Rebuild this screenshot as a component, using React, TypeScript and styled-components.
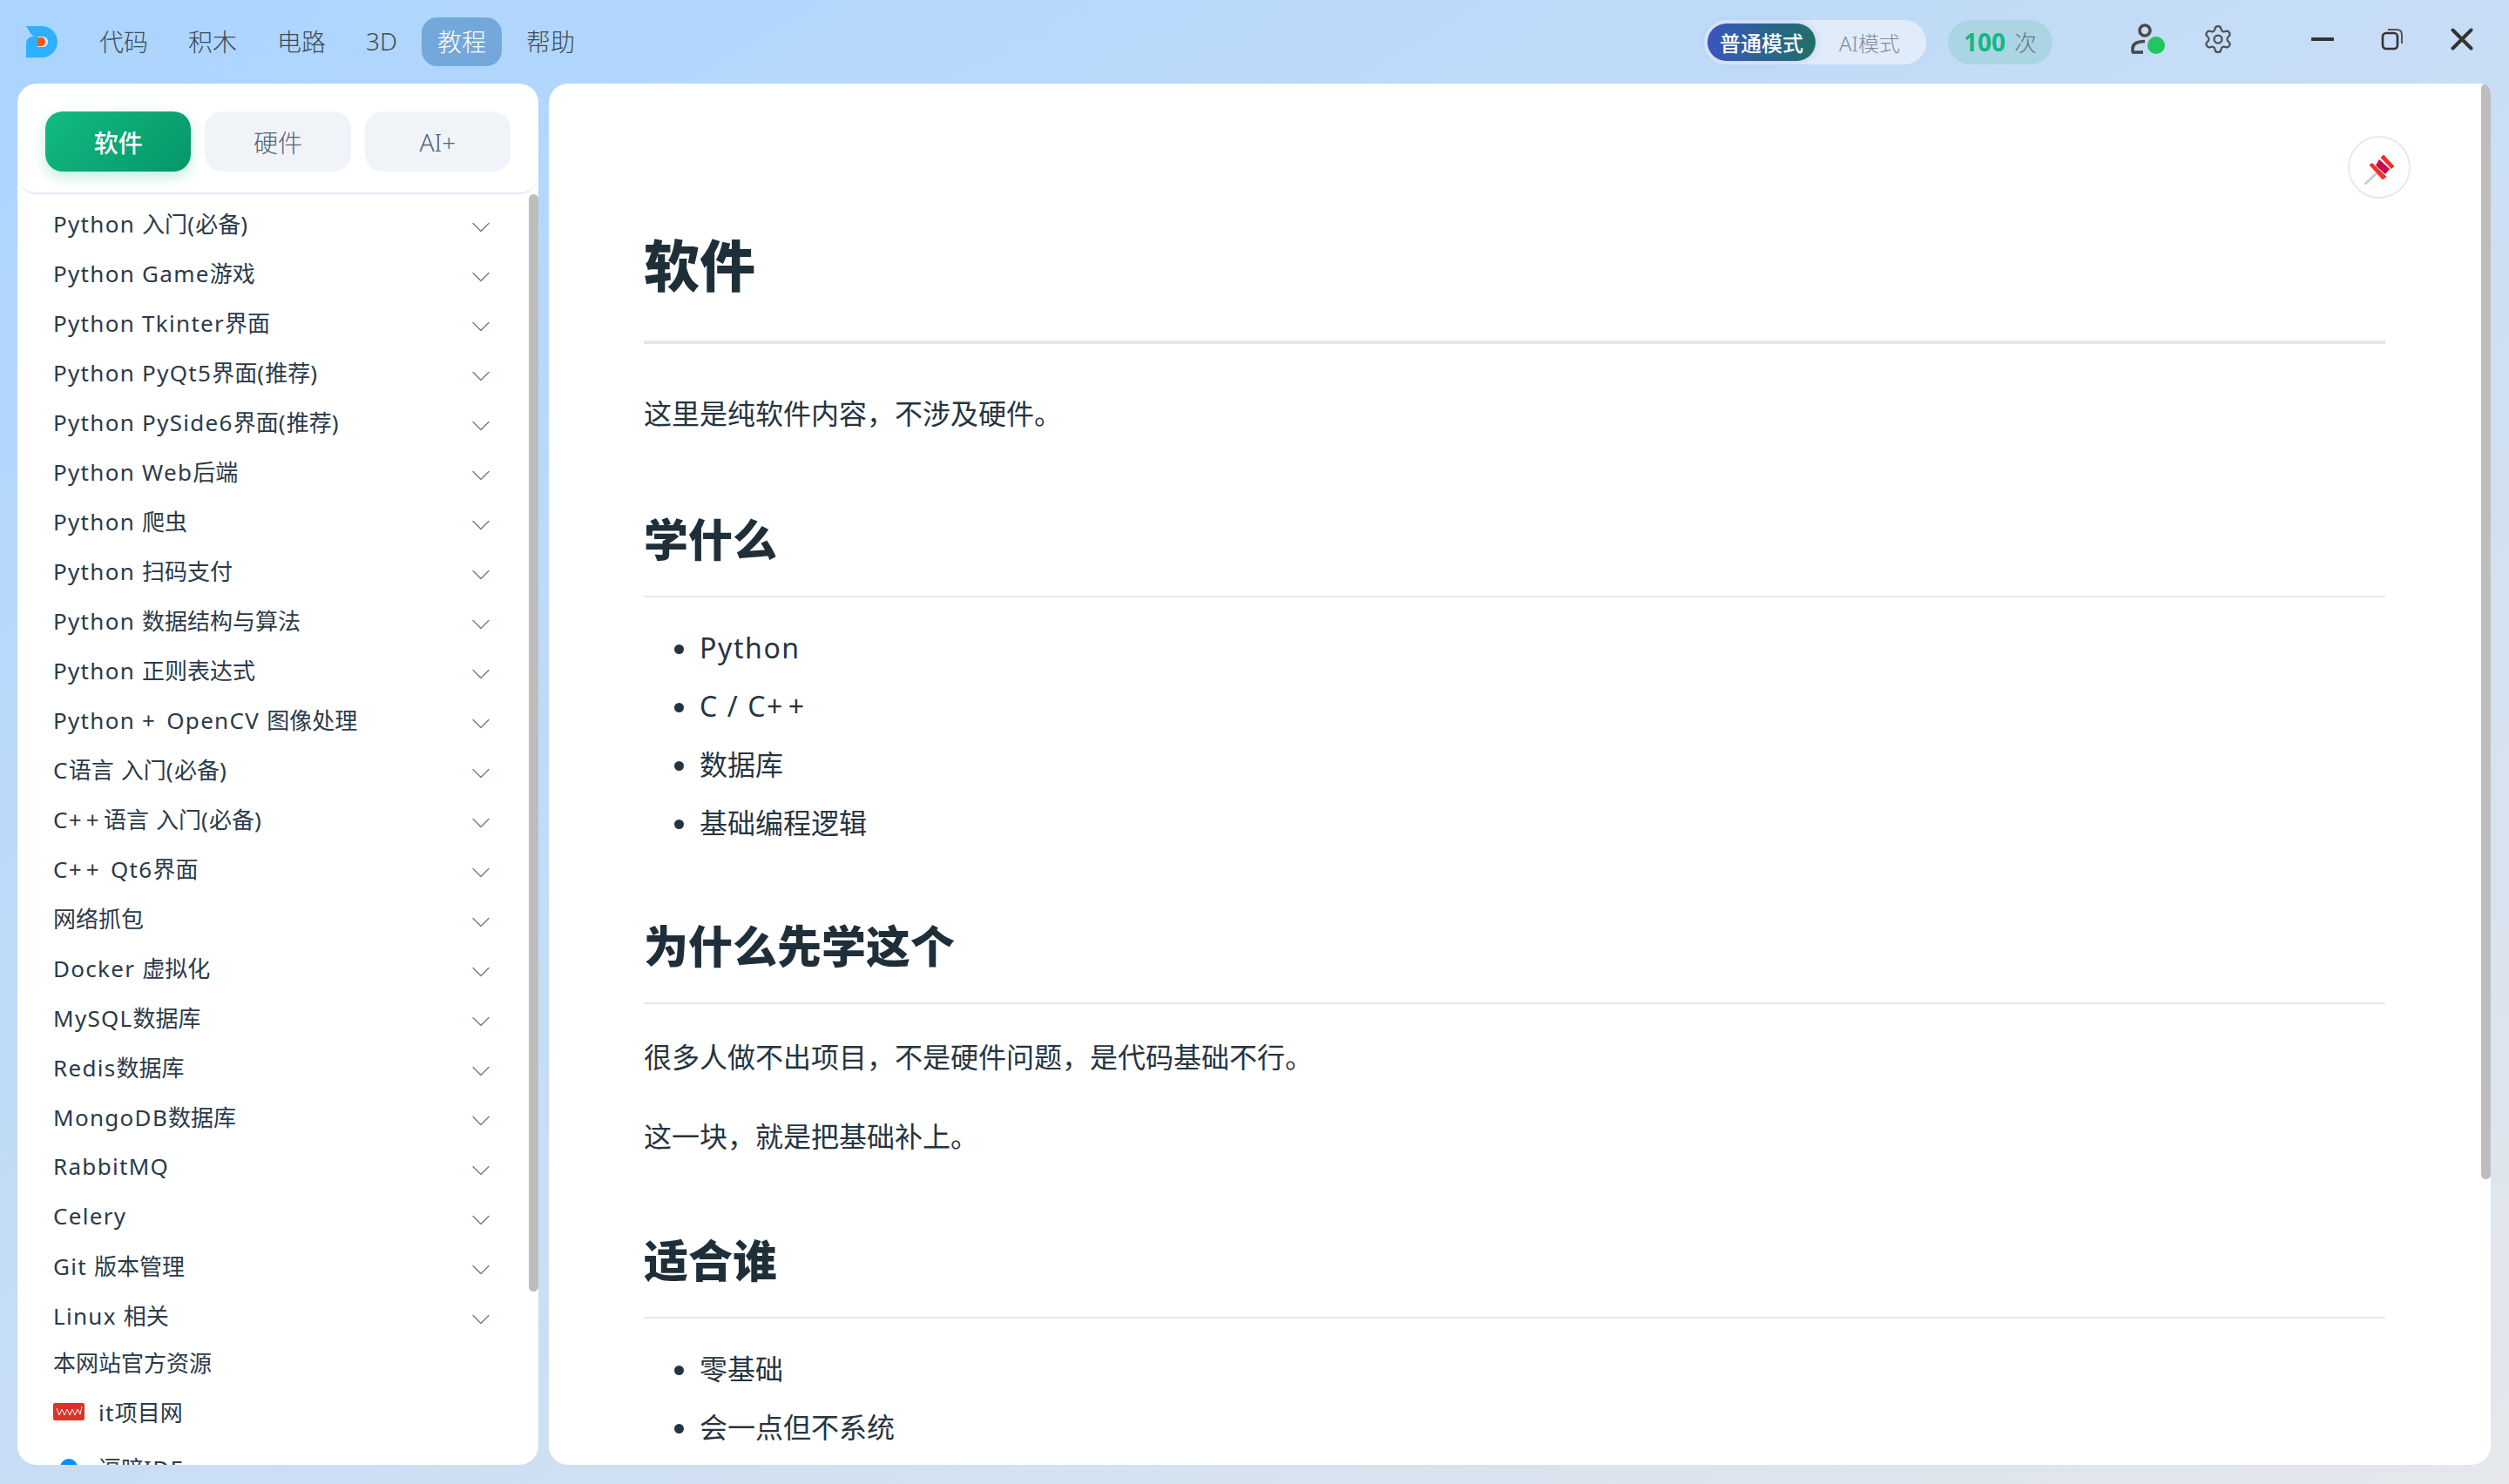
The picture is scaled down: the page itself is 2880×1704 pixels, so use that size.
import React from "react";
import styled, { createGlobalStyle } from "styled-components";
import { ChevronDown, Settings } from "lucide-react";

const FONT = `"Noto Sans", "Noto Sans CJK SC", sans-serif`;

const GlobalStyle = createGlobalStyle`
  html, body {
    margin: 0;
    padding: 0;
    height: 100%;
  }
  body {
    font-family: ${FONT};
    overflow: hidden;
  }
  * {
    box-sizing: border-box;
  }
`;

const navItems = ["代码", "积木", "电路", "3D", "教程", "帮助"];

const courses = [
  "Python 入门(必备)",
  "Python Game游戏",
  "Python Tkinter界面",
  "Python PyQt5界面(推荐)",
  "Python PySide6界面(推荐)",
  "Python Web后端",
  "Python 爬虫",
  "Python 扫码支付",
  "Python 数据结构与算法",
  "Python 正则表达式",
  "Python + OpenCV 图像处理",
  "C语言 入门(必备)",
  "C++语言 入门(必备)",
  "C++ Qt6界面",
  "网络抓包",
  "Docker 虚拟化",
  "MySQL数据库",
  "Redis数据库",
  "MongoDB数据库",
  "RabbitMQ",
  "Celery",
  "Git 版本管理",
  "Linux 相关",
];

const Shell = styled.div`
  width: 2880px;
  height: 1704px;
  display: flex;
  flex-direction: column;
  overflow: hidden;
  background: linear-gradient(150deg, #aad4ff, #e5e7eb);
`;

const TopBar = styled.header`
  height: 96px;
  flex: none;
  display: flex;
  align-items: center;
  padding: 0 41px 0 30px;
`;

const Logo = styled.svg`
  width: 36px;
  height: 36px;
  margin-right: 30px;
`;

const Nav = styled.nav`
  display: flex;
  gap: 10px;
`;

const NavItem = styled.a<{ $active?: boolean }>`
  height: 56px;
  padding: 0 18px 2px;
  display: flex;
  align-items: center;
  border-radius: 18px;
  font-size: 28px;
  font-weight: 300;
  color: ${(p) => (p.$active ? "#ffffff" : "#3f4a55")};
  background: ${(p) => (p.$active ? "#74a7da" : "transparent")};
`;

const RightBar = styled.div`
  margin-left: auto;
  display: flex;
  align-items: center;
`;

const ModeSwitch = styled.div`
  width: 255px;
  height: 51px;
  padding: 4px;
  margin-right: 25px;
  display: flex;
  align-items: center;
  border-radius: 26px;
  background: #e1ecfb;
`;

const ModeActive = styled.span`
  width: 124px;
  height: 43px;
  display: flex;
  align-items: center;
  justify-content: center;
  border-radius: 22px;
  font-size: 24px;
  font-weight: 500;
  color: #ffffff;
  background: linear-gradient(90deg, #3a55bd, #1f7068);
  box-shadow: 0 0 10px rgba(90, 130, 220, 0.3);
`;

const ModeIdle = styled.span`
  margin-left: 27px;
  font-size: 24px;
  font-weight: 300;
  color: #7f8b9b;
`;

const Counter = styled.div`
  width: 120px;
  height: 51px;
  margin-right: 90px;
  display: flex;
  align-items: center;
  justify-content: center;
  gap: 10px;
  border-radius: 26px;
  background: #acd5e4;
`;

const CounterValue = styled.b`
  font-size: 28px;
  font-weight: 700;
  color: #10b981;
`;

const CounterUnit = styled.span`
  font-size: 26px;
  font-weight: 300;
  color: #66757f;
`;

const UserIcon = styled.svg`
  width: 40px;
  height: 36px;
  margin: 0 42px 6px 0;
`;

const GearIcon = styled(Settings)`
  width: 36px;
  height: 36px;
  margin: 0 89px 6px 0;
  color: #4a4f55;
`;

const WinIcon = styled.svg<{ $gap: number }>`
  width: 26px;
  height: 26px;
  margin: 0 ${(p) => p.$gap}px 6px 0;
`;

const Body = styled.div`
  flex: 1;
  min-height: 0;
  display: flex;
  gap: 12px;
  padding: 0 21px 22px 20px;
`;

const SidePanel = styled.aside`
  position: relative;
  width: 598px;
  flex: none;
  display: flex;
  flex-direction: column;
  overflow: hidden;
  border-radius: 22px;
  background: #ffffff;
`;

const Tabs = styled.div`
  flex: none;
  display: flex;
  gap: 16px;
  padding: 32px;
  padding-bottom: 24px;
  border-bottom: 2px solid #e5e8f5;
  border-radius: 0 0 22px 22px;
`;

const Tab = styled.button<{ $active?: boolean }>`
  flex: 1;
  height: 69px;
  border: 0;
  padding: 0;
  border-radius: 20px;
  font-family: ${FONT};
  font-size: 28px;
  font-weight: ${(p) => (p.$active ? 500 : 300)};
  color: ${(p) => (p.$active ? "#ffffff" : "#566372")};
  background: ${(p) =>
    p.$active ? "linear-gradient(135deg, #13bb82, #059669)" : "#f0f4f9"};
  box-shadow: ${(p) =>
    p.$active ? "0 6px 16px rgba(16, 185, 129, 0.25)" : "none"};
`;

const List = styled.ul`
  list-style: none;
  margin: 0;
  padding: 4px 0 0;
  flex: 1;
  min-height: 0;
  overflow: hidden;
`;

const Row = styled.li`
  height: 57px;
  padding: 0 48px 0 41px;
  display: flex;
  align-items: center;
  justify-content: space-between;
  font-size: 26px;
  font-weight: 400;
  color: #2b3a48;
`;

const Chevron = styled(ChevronDown)`
  width: 36px;
  height: 36px;
  margin-top: 10px;
  color: #6b7a90;
`;

const PlainRow = styled(Row)<{ $h: number }>`
  height: ${(p) => p.$h}px;
  justify-content: flex-start;
  gap: 16px;
`;

const Latin = styled.span`
  letter-spacing: 0.05em;
`;

const Plus = styled.span`
  letter-spacing: 0.2em;
`;

const Favicon = styled.svg`
  width: 36px;
  height: 20px;
`;

const Thumb = styled.div<{ $top: number; $height: number }>`
  position: absolute;
  top: ${(p) => p.$top}px;
  right: 0;
  width: 11px;
  height: ${(p) => p.$height}px;
  border-radius: 6px;
  background: #bdbdbd;
`;

const MainPanel = styled.main`
  position: relative;
  flex: 1;
  min-width: 0;
  overflow: hidden;
  border-radius: 22px 10px 22px 22px;
  background: #ffffff;
`;

const PinButton = styled.button`
  position: absolute;
  top: 60px;
  right: 92px;
  width: 72px;
  height: 72px;
  padding: 4px 0 0;
  display: flex;
  align-items: center;
  justify-content: center;
  border: 2px solid #e4e9f3;
  border-radius: 50%;
  background: #ffffff;
`;

const Article = styled.article`
  padding: 171px 121px 0 109px;
  color: #1f2f3a;
`;

const H1 = styled.h1`
  margin: 0;
  padding-bottom: 48px;
  border-bottom: 4px solid #e5e8f0;
  font-size: 64px;
  line-height: 76px;
  font-weight: 900;
`;

const H2 = styled.h2`
  margin: 87px 0 0;
  padding-bottom: 35px;
  border-bottom: 2px solid #e5e8f0;
  font-size: 51px;
  line-height: 60px;
  font-weight: 900;
`;

const Para = styled.p`
  margin: 36px 0 0;
  font-size: 32px;
  line-height: 50px;
  font-weight: 400;
  color: #26343f;

  h1 + & {
    margin-top: 55px;
    padding-bottom: 2px;
  }
  & + & {
    margin-top: 41px;
  }
`;

const Bullets = styled.ul`
  margin: 34px 0 0;
  padding: 0 0 0 64px;
`;

const Bullet = styled.li`
  font-size: 32px;
  line-height: 48px;
  font-weight: 400;
  color: #26343f;

  & + & {
    margin-top: 19px;
  }
`;

// latin runs sit wider than the cjk ones in the reference, plus signs most of all
const latinRun = (run: string, key: number) => (
  <Latin key={key}>
    {run
      .split(/(\+)/)
      .filter(Boolean)
      .map((part, i) => (part === "+" ? <Plus key={i}>+</Plus> : part))}
  </Latin>
);

const mixed = (text: string) =>
  text
    .split(/([\x20-\x7e]+)/)
    .filter(Boolean)
    .map((run, i) => (/^[\x20-\x7e]+$/.test(run) ? latinRun(run, i) : run));

export default function App() {
  return (
    <Shell>
      <GlobalStyle />
      <TopBar>
        <Logo viewBox="0 0 36 36">
          <path
            d="M0 0H18C28 0 36 8 36 18C36 28 28 36 18 36H0V20C0 15 4 11.5 10 11.5C5 11 3 4 0 0Z"
            fill="#2eb0ff"
          />
          <path d="M13 12H18C22 12 25 14 25 18C25 22 22 24 18 24H13Z" fill="#cfe6ff" />
          <path d="M13 13H17C20 13 22 15 22 18C22 21 20 23 17 23H13Z" fill="#f15a16" />
        </Logo>
        <Nav>
          {navItems.map((item) => (
            <NavItem key={item} $active={item === "教程"}>
              {item}
            </NavItem>
          ))}
        </Nav>
        <RightBar>
          <ModeSwitch>
            <ModeActive>普通模式</ModeActive>
            <ModeIdle>AI模式</ModeIdle>
          </ModeSwitch>
          <Counter>
            <CounterValue>100</CounterValue>
            <CounterUnit>次</CounterUnit>
          </Counter>
          <UserIcon viewBox="0 0 40 36">
            <circle cx="16" cy="8" r="6" fill="none" stroke="#4a4a4a" strokeWidth="3.6" />
            <path d="M2 33V29C2 23 8 20.5 16 20.5" fill="none" stroke="#4a4a4a" strokeWidth="3.6" />
            <path d="M1 33H14" fill="none" stroke="#4a4a4a" strokeWidth="3.6" />
            <circle cx="29" cy="25" r="10" fill="#22c55e" />
          </UserIcon>
          <GearIcon strokeWidth={1.5} />
          <WinIcon $gap={54} viewBox="0 0 26 26">
            <path d="M1.5 13H24.5" stroke="#333333" strokeWidth="4" strokeLinecap="round" />
          </WinIcon>
          <WinIcon $gap={54} viewBox="0 0 26 26">
            <rect x="2" y="6" width="17" height="18" rx="4" fill="none" stroke="#333333" strokeWidth="2.6" />
            <path d="M8 2H18C22 2 24 4 24 8V18" fill="none" stroke="#555555" strokeWidth="2" />
          </WinIcon>
          <WinIcon $gap={0} viewBox="0 0 26 26">
            <path d="M2.5 2.5L23.5 23.5M23.5 2.5L2.5 23.5" stroke="#333333" strokeWidth="4" strokeLinecap="round" />
          </WinIcon>
        </RightBar>
      </TopBar>
      <Body>
        <SidePanel>
          <Tabs>
            <Tab $active>软件</Tab>
            <Tab>硬件</Tab>
            <Tab>AI+</Tab>
          </Tabs>
          <List>
            {courses.map((name) => (
              <Row key={name}>
                <span>{mixed(name)}</span>
                <Chevron strokeWidth={0.9} />
              </Row>
            ))}
            <PlainRow $h={51}>本网站官方资源</PlainRow>
            <PlainRow $h={63}>
              <Favicon viewBox="0 0 36 20">
                <rect width="36" height="20" rx="2" fill="#dd3327" />
                <path
                  d="M4 6L7 14L10 7L13 14L16 7L19 14L22 7L25 14L28 7L31 13L33 4"
                  fill="none"
                  stroke="#ffffff"
                  strokeWidth="1"
                />
              </Favicon>
              <span>{mixed("it项目网")}</span>
            </PlainRow>
            <PlainRow $h={65}>
              <Favicon viewBox="0 0 36 20">
                <circle cx="18" cy="10" r="10" fill="#0b8cff" />
              </Favicon>
              <span>{mixed("逗暗IDE")}</span>
            </PlainRow>
          </List>
          <Thumb $top={127} $height={1260} />
        </SidePanel>
        <MainPanel>
          <Article>
            <H1>软件</H1>
            <Para>这里是纯软件内容，不涉及硬件。</Para>
            <H2>学什么</H2>
            <Bullets>
              <Bullet>{mixed("Python")}</Bullet>
              <Bullet>{mixed("C / C++")}</Bullet>
              <Bullet>数据库</Bullet>
              <Bullet>基础编程逻辑</Bullet>
            </Bullets>
            <H2>为什么先学这个</H2>
            <Para>很多人做不出项目，不是硬件问题，是代码基础不行。</Para>
            <Para>这一块，就是把基础补上。</Para>
            <H2>适合谁</H2>
            <Bullets>
              <Bullet>零基础</Bullet>
              <Bullet>会一点但不系统</Bullet>
            </Bullets>
          </Article>
          <PinButton>
            <svg width="35" height="35" viewBox="0 0 35 35">
              <path d="M13 23L1.5 33.5" stroke="#cccccc" strokeWidth="3" strokeLinecap="round" />
              <path d="M17 6L29 17L24 23L13 13Z" fill="#c40b4e" />
              <path d="M22 1.5L33.5 14L31 16L19.5 4Z" fill="#f4302e" stroke="#f4302e" strokeWidth="1.5" strokeLinejoin="round" />
              <path d="M6.5 12.5L9 11L24.5 26L21 28.5Z" fill="#f4302e" stroke="#f4302e" strokeWidth="1.5" strokeLinejoin="round" />
            </svg>
          </PinButton>
          <Thumb $top={0} $height={1258} />
        </MainPanel>
      </Body>
    </Shell>
  );
}
